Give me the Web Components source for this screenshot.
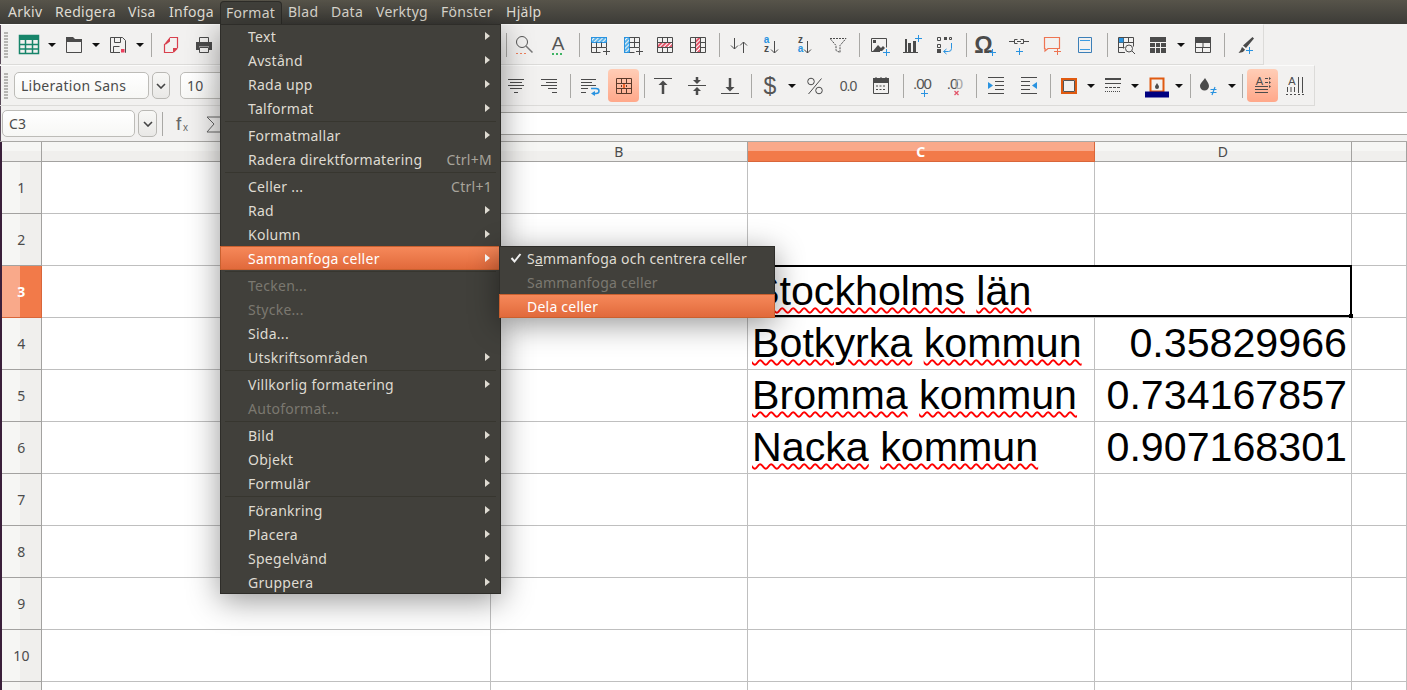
<!DOCTYPE html>
<html lang="sv">
<head>
<meta charset="utf-8">
<title>Calc</title>
<style>
  html, body { margin: 0; height: 100%; overflow: hidden; background: #f2f1f0; }
  body { font: 14px "Noto Sans", sans-serif; letter-spacing: .27px; }
</style>
</head>
<body>
<lo-app>
  <lo-menubar>
    <lo-title w="47" style="margin-left:2px">Arkiv</lo-title>
    <lo-title w="73">Redigera</lo-title>
    <lo-title w="41">Visa</lo-title>
    <lo-title w="57">Infoga</lo-title>
    <lo-title w="62" open>Format</lo-title>
    <lo-title w="43">Blad</lo-title>
    <lo-title w="45">Data</lo-title>
    <lo-title w="65">Verktyg</lo-title>
    <lo-title w="65">Fönster</lo-title>
    <lo-title w="50">Hjälp</lo-title>
  </lo-menubar>

  <lo-toolbar end="1264">
    <lo-grip c="5.5" w="4"></lo-grip>
    <lo-tool icon="sheet" c="29"></lo-tool><lo-drop c="52"></lo-drop>
    <lo-tool icon="folder" c="74"></lo-tool><lo-drop c="96"></lo-drop>
    <lo-tool icon="save" c="118"></lo-tool><lo-drop c="140"></lo-drop>
    <lo-sep c="151.5"></lo-sep>
    <lo-tool icon="pdf" c="171"></lo-tool>
    <lo-tool icon="print" c="204"></lo-tool>
    <lo-sep c="506"></lo-sep>
    <lo-tool icon="search" c="524"></lo-tool>
    <lo-tool icon="fontcolor" c="558"></lo-tool>
    <lo-sep c="579.5"></lo-sep>
    <lo-tool icon="insrow" c="599"></lo-tool>
    <lo-tool icon="inscol" c="632"></lo-tool>
    <lo-tool icon="delrow" c="665"></lo-tool>
    <lo-tool icon="delcol" c="698"></lo-tool>
    <lo-sep c="719.5"></lo-sep>
    <lo-tool icon="sort" c="739"></lo-tool>
    <lo-tool icon="az" c="771"></lo-tool>
    <lo-tool icon="za" c="805"></lo-tool>
    <lo-tool icon="filter" c="838"></lo-tool>
    <lo-sep c="859.5"></lo-sep>
    <lo-tool icon="image" c="879"></lo-tool>
    <lo-tool icon="chart" c="912"></lo-tool>
    <lo-tool icon="pivot" c="945"></lo-tool>
    <lo-sep c="966.5"></lo-sep>
    <lo-tool icon="omega" c="984"></lo-tool>
    <lo-tool icon="link" c="1019"></lo-tool>
    <lo-tool icon="comment" c="1052"></lo-tool>
    <lo-tool icon="hf" c="1085"></lo-tool>
    <lo-sep c="1107"></lo-sep>
    <lo-tool icon="data" c="1126"></lo-tool>
    <lo-tool icon="table" c="1158"></lo-tool><lo-drop c="1181"></lo-drop>
    <lo-tool icon="table2" c="1203"></lo-tool>
    <lo-sep c="1224.5"></lo-sep>
    <lo-tool icon="brush" c="1245"></lo-tool>
  </lo-toolbar>

  <lo-toolbar end="1315">
    <lo-grip c="5.5" w="4"></lo-grip>
    <lo-combo c="81.5" w="135">Liberation Sans</lo-combo>
    <lo-combo-btn c="161" w="18"></lo-combo-btn>
    <lo-combo c="210" w="60">10</lo-combo>
    <lo-tool icon="alignc" c="516"></lo-tool>
    <lo-tool icon="alignr" c="549"></lo-tool>
    <lo-sep c="570.5"></lo-sep>
    <lo-tool icon="wrap" c="590"></lo-tool>
    <lo-tool icon="merge" c="623.5" w="31" active></lo-tool>
    <lo-sep c="644.5"></lo-sep>
    <lo-tool icon="top" c="663"></lo-tool>
    <lo-tool icon="middle" c="697"></lo-tool>
    <lo-tool icon="bottom" c="730"></lo-tool>
    <lo-sep c="751.5"></lo-sep>
    <lo-tool icon="dollar" c="770"></lo-tool><lo-drop c="792"></lo-drop>
    <lo-tool icon="percent" c="815"></lo-tool>
    <lo-tool icon="num" c="848"></lo-tool>
    <lo-tool icon="calendar" c="881"></lo-tool>
    <lo-sep c="903"></lo-sep>
    <lo-tool icon="decplus" c="922"></lo-tool>
    <lo-tool icon="decminus" c="955"></lo-tool>
    <lo-sep c="976.5"></lo-sep>
    <lo-tool icon="indent" c="996"></lo-tool>
    <lo-tool icon="outdent" c="1029"></lo-tool>
    <lo-sep c="1050.5"></lo-sep>
    <lo-tool icon="border" c="1069"></lo-tool><lo-drop c="1091"></lo-drop>
    <lo-tool icon="borderstyle" c="1113"></lo-tool><lo-drop c="1135"></lo-drop>
    <lo-tool icon="bordercolor" c="1157"></lo-tool><lo-drop c="1179"></lo-drop>
    <lo-sep c="1190.5"></lo-sep>
    <lo-tool icon="cond" c="1208"></lo-tool><lo-drop c="1232"></lo-drop>
    <lo-sep c="1242.5"></lo-sep>
    <lo-tool icon="textwrap" c="1262.5" w="31" active></lo-tool>
    <lo-tool icon="vertical" c="1295"></lo-tool>
  </lo-toolbar>

  <lo-namebar>C3</lo-namebar>

  <lo-sheet>
    <span slot="C3"><lo-typo>Stockholms</lo-typo> <lo-typo>län</lo-typo></span>
    <span slot="C4"><lo-typo>Botkyrka</lo-typo> <lo-typo>kommun</lo-typo></span>
    <span slot="D4">0.35829966</span>
    <span slot="C5"><lo-typo>Bromma</lo-typo> <lo-typo>kommun</lo-typo></span>
    <span slot="D5">0.734167857</span>
    <span slot="C6"><lo-typo>Nacka</lo-typo> <lo-typo>kommun</lo-typo></span>
    <span slot="D6">0.907168301</span>
  </lo-sheet>

  <lo-menu style="left:220px;top:24px;width:281px">
    <lo-item more>Text</lo-item>
    <lo-item more>Avstånd</lo-item>
    <lo-item more>Rada upp</lo-item>
    <lo-item more>Talformat</lo-item>
    <lo-rule></lo-rule>
    <lo-item more>Formatmallar</lo-item>
    <lo-item keys="Ctrl+M">Radera direktformatering</lo-item>
    <lo-rule></lo-rule>
    <lo-item keys="Ctrl+1">Celler ...</lo-item>
    <lo-item more>Rad</lo-item>
    <lo-item more>Kolumn</lo-item>
    <lo-item more hot>Sammanfoga celler</lo-item>
    <lo-rule></lo-rule>
    <lo-item off>Tecken...</lo-item>
    <lo-item off>Stycke...</lo-item>
    <lo-item>Sida...</lo-item>
    <lo-item more>Utskriftsområden</lo-item>
    <lo-rule></lo-rule>
    <lo-item more>Villkorlig formatering</lo-item>
    <lo-item off>Autoformat...</lo-item>
    <lo-rule></lo-rule>
    <lo-item more>Bild</lo-item>
    <lo-item more>Objekt</lo-item>
    <lo-item more>Formulär</lo-item>
    <lo-rule></lo-rule>
    <lo-item more>Förankring</lo-item>
    <lo-item more>Placera</lo-item>
    <lo-item more>Spegelvänd</lo-item>
    <lo-item more>Gruppera</lo-item>
  </lo-menu>

  <lo-menu style="left:499px;top:246px;width:276px;letter-spacing:.22px">
    <lo-item checked>S<span style="text-decoration:underline">a</span>mmanfoga och centrera celler</lo-item>
    <lo-item off>Sammanfoga celler</lo-item>
    <lo-item hot>Dela celler</lo-item>
  </lo-menu>
</lo-app>

<script>
"use strict";
const D = "#4b4b4b", B = "#2a93e0", R = "#e2566a";

const plus = (x, y, c = B) => `<path stroke="${c}" fill="none" d="M${x - 3} ${y + .5}h7M${x + .5} ${y - 3}v7"/>`;
const glyph = (t, x, y, size, c = D, extra = "") =>
  `<text x="${x}" y="${y}" font-family="Liberation Sans" font-size="${size}" text-anchor="middle" fill="${c}" ${extra}>${t}</text>`;
const hatch = (col) => `<defs><pattern id="h" width="3" height="3" patternUnits="userSpaceOnUse" patternTransform="rotate(-45)"><rect width="3" height="2" fill="${col}"/></pattern></defs>`;
const line = (d, c = D, w = 1) => `<path fill="none" stroke="${c}" stroke-width="${w}" d="${d}"/>`;

// icons are drawn in a 24x24 box, 1 unit = 1 pixel
const ICONS = {
  sheet: `<rect x="2" y="2" width="20" height="5" fill="#17856a"/>` + line("M2.5 2.5h19v18h-19zM2.5 11.5h19M2.5 16h19M8.5 7v13M15.5 7v13", "#17856a", 1.5),
  folder: `<path fill="${D}" d="M4 4h7l2 2h7v3H4z"/>` + line("M4.5 5v14.5h15V6"),
  save: line("M4.5 4.5h12l3 3v12h-15zM8.5 5v4.5h6V5M7.5 19v-5.5h6") + `<rect x="14" y="15" width="5" height="5" fill="#f2f1f0"/><rect x="15" y="16" width="3.5" height="3.5" fill="#ec3f5d"/>`,
  pdf: line("M11 4.5h7.5V15M14 19.5H5.5V11", "#d8404e", 1.2) + `<path fill="#d8404e" d="M11 4v4.5L7 11.5H5zM18.5 15v1L15 19.5h-1V15z"/>`,
  print: line("M7.5 9V4.5h9V9M7.5 14.5h9v5h-9z") + `<path fill="${D}" d="M4 9h16v8h-3v-3.5H7V17H4z"/>`,
  search: line("M15.5 9a5.5 5.5 0 1 1-11 0a5.5 5.5 0 1 1 11 0z", "#555") + line("M14 13l6.5 6.5", "#777", 1.5) + `<path stroke="#f0805c" stroke-dasharray="2 2" d="M4 20.5h10"/>`,
  fontcolor: glyph("A", 12, 17, 19, "#555") + `<path stroke="#3fb465" stroke-width="2" stroke-dasharray="2 2" d="M6 21h12"/>`,
  insrow: hatch("#5ab4ec") + `<rect x="4.5" y="4.5" width="15" height="5" fill="url(#h)" stroke="#2a93e0"/>` + line("M4.5 9.5v10h9M4.5 14.5h15M9.5 9.5v10M14.5 9.5v5M19.5 9.5v5") + plus(19, 18, D),
  inscol: hatch("#5ab4ec") + `<rect x="4.5" y="4.5" width="5" height="15" fill="url(#h)" stroke="#2a93e0"/>` + line("M9.5 4.5h10v10M9.5 9.5h10M9.5 14.5h10M14.5 4.5v10M9.5 19.5h5") + plus(19, 18, D),
  delrow: hatch("#e2566a") + line("M4.5 4.5h15v15h-15zM4.5 9.5h15M4.5 14.5h15M9.5 4.5v15M14.5 4.5v15") + `<rect x="5" y="10" width="14" height="4" fill="#fff"/><rect x="5" y="10" width="14" height="4" fill="url(#h)"/>`,
  delcol: hatch("#e2566a") + line("M4.5 4.5h15v15h-15zM4.5 9.5h15M4.5 14.5h15M9.5 4.5v15M14.5 4.5v15") + `<rect x="10" y="5" width="4" height="14" fill="#fff"/><rect x="10" y="5" width="4" height="14" fill="url(#h)"/>`,
  sort: line("M7.5 5v11M4 12.5l3.5 3.5 3.5-3.5M16.5 20V9M13 12.5L16.5 9l3.5 3.5"),
  az: glyph("a", 7.5, 10, 10, B, 'font-weight="bold"') + glyph("z", 7.5, 19, 10, D, 'font-weight="bold"') + line("M15.5 8v12M12 16.5l3.5 3.5 3.5-3.5"),
  za: glyph("z", 7.5, 10, 10, D, 'font-weight="bold"') + glyph("a", 7.5, 19, 10, B, 'font-weight="bold"') + line("M14.5 8v12M11 16.5l3.5 3.5 3.5-3.5"),
  filter: `<path fill="none" stroke="${D}" stroke-dasharray="2 1" d="M4 5.5h16L14 12.5v7l-4-2v-5z"/>`,
  image: line("M4.5 5.5h15v9M13 18.5H4.5v-13") + `<path fill="${D}" d="M6 18l5-6 3 3 2-2 2 2-3 3z"/><rect x="6" y="7" width="3" height="3" fill="${D}"/>` + plus(19, 19),
  chart: line("M3 19.5h15") + `<rect x="5" y="6" width="2" height="13" fill="${D}"/><rect x="8" y="10" width="3" height="9" fill="${D}"/><rect x="13" y="8" width="3" height="11" fill="${D}"/>` + plus(18, 5),
  pivot: line("M4.5 4.5h3v3h-3zM4.5 11.5h3v3h-3zM16.5 4.5h2v2h-2z") + `<rect x="11" y="4" width="3" height="3" fill="${D}"/><rect x="4" y="16" width="4" height="4" fill="${D}"/>` + line("M18.5 10v5.5q0 3-3 3H11M13.5 16l-3 2.5 3 2.5", B),
  omega: glyph("Ω", 11.5, 20, 23, D, 'font-weight="bold"') + plus(20, 19),
  link: line("M2 8.5h5M7.5 6.5h3M7.5 10.5h3M7.5 6.5v4M13.5 6.5h3M13.5 10.5h3M16.5 6.5v4M10 8.5h4M17 8.5h5") + plus(12, 18),
  comment: line("M4.5 4.5h15v11H8L5 18v-2.5h-.5z", "#ee7452", 1.2) + plus(17, 18, "#ee7452"),
  hf: line("M5.5 4.5h13v15h-13z", "#3c7fb8") + line("M7 7.5h10M7 16.5h10", "#3c9ae0", 1),
  data: line("M4.5 4.5h15v9M11 19.5H4.5v-15M4.5 9.5h15M4.5 14.5h6M9.5 4.5v11M14.5 4.5v5") + `<rect x="5" y="5" width="4.5" height="4.5" fill="${B}"/>` + line("M18.5 15.5a3.5 3.5 0 1 1-7 0a3.5 3.5 0 1 1 7 0zM18 18l3 3"),
  table: `<rect x="4" y="4" width="16" height="16" fill="${D}"/>` + line("M4 9.5h16M4 14.5h16M9.5 9v11M14.5 9v11", "#f2f1f0"),
  table2: `<rect x="4" y="4" width="16" height="5" fill="${D}"/>` + line("M4.5 4.5h15v15h-15zM4.5 9.5h15M4.5 14.5h15M12 9.5v5M11.5 14.5v5"),
  brush: `<path fill="${D}" d="M19.5 4L21 5.5 13 15l-3-2.5zM9 14l3 2.5Q11 19.5 5.5 20 8 17.5 9 14z"/>` + plus(16, 17),
  alignc: line("M4 5.5h16M6 8.5h12M4 11.5h16M6 14.5h12M10 18.5h4"),
  alignr: line("M4 5.5h16M9 8.5h11M4 11.5h16M11 14.5h9M15 18.5h5"),
  wrap: line("M3 5.5h15M3 8.5h11M3 11.5h15M3 14.5h7M3 18.5h5") + line("M13 14.5h5q3 0 3 2.5t-3 2.5h-3", B, 1.5) + `<path fill="${B}" d="M17 17v5l-4-2.5z"/>`,
  merge: line("M4.5 4.5h15v15h-15zM4.5 9.5h15M4.5 14.5h15M9.5 4.5v5M14.5 4.5v5M9.5 14.5v5M14.5 14.5v5M9.5 11v2M14.5 11v2", "#5a3a2a") + `<path fill="#f0642a" d="M11 10h2v4h-2z"/>`,
  top: line("M3 4.5h18") + line("M12 20V10", D, 2.5) + `<path fill="${D}" d="M7.5 11L12 6.5 16.5 11z"/>`,
  middle: line("M3 11.5h18") + line("M12 3v4M12 16v5", D, 2.5) + `<path fill="${D}" d="M8 6h8l-4 4zM8 17h8l-4-4z"/>`,
  bottom: line("M3 19.5h18") + line("M12 4v10", D, 2.5) + `<path fill="${D}" d="M7.5 13h9L12 17.5z"/>`,
  dollar: glyph("$", 12, 20, 23, "#555"),
  percent: line("M18.5 4.5L5.5 20") + `<circle cx="8" cy="7.5" r="3.3" fill="none" stroke="${D}"/><circle cx="16" cy="16.5" r="3.3" fill="none" stroke="${D}"/>`,
  num: glyph("0.0", 12, 17, 14, "#555", 'letter-spacing="-1"'),
  calendar: `<rect x="4" y="4" width="16" height="5" fill="${D}"/>` + line("M4.5 6v13.5h15V6M7 3v3M12 3v3M17 3v3", D) + `<path stroke="${D}" stroke-dasharray="2 1.5" d="M7 12h10M7 15.5h10"/>`,
  decplus: glyph(".00", 12, 15, 15, "#555", 'letter-spacing="-1"') + plus(14, 19),
  decminus: glyph(".0", 9, 15, 15, "#555", 'letter-spacing="-1"') + glyph("0", 16, 15, 15, "#aaa") + line("M11.5 17l4 4M15.5 17l-4 4", R, 1.3),
  indent: line("M4 3.5h16M11 7.5h9M11 11.5h9M11 15.5h9M4 19.5h16") + `<path fill="${B}" d="M4 8l5 3.5L4 15z"/>`,
  outdent: line("M4 3.5h16M4 7.5h9M4 11.5h9M4 15.5h9M4 19.5h16") + `<path fill="${B}" d="M20 8l-5 3.5 5 3.5z"/>`,
  border: `<rect x="5" y="5" width="14" height="14" fill="none" stroke="#e05a10" stroke-width="2"/>` + line("M6.5 6.5h11v11h-11z", "#555"),
  borderstyle: `<rect x="4" y="4" width="16" height="2" fill="${D}"/>` + line("M4 9.5h16") + `<path stroke="${D}" stroke-dasharray="3 1" d="M4 13.5h16"/><path stroke="${D}" stroke-dasharray="1 1" d="M4 17.5h16"/>`,
  bordercolor: line("M5.5 4.5h13v13h-13z", "#e05a10", 2) + `<path fill="${D}" d="M12 9c1 2 2 2.5 2 4a2 2 0 0 1-4 0c0-1.5 1-2 2-4z"/><rect x="0" y="17.5" width="24" height="6" fill="#000080"/>`,
  cond: `<path fill="${D}" d="M9 4c1.5 3 4 5 4 8a4.5 4.5 0 0 1-9 0c0-3 3.5-5 5-8z"/>` + line("M14.5 15.5h6M14.5 18.5h6M19 13l-3 8", B, 1.2),
  textwrap: glyph("A", 8.5, 11, 11) + line("M14 4.5h3M14 8.5h3M4 12.5h13M4 15.5h13M4 18.5h13") + `<path fill="${D}" d="M18 3v3l2-1.5zM18 7v3l2-1.5zM18 11v3l2-1.5z"/>`,
  vertical: glyph("A", 9, 11, 11) + line("M15.5 3v16M19.5 3v16M4.5 13v5M8 13v5M11.5 13v5") + `<path stroke="${D}" stroke-dasharray="2 2" d="M3 20.5h18"/>`,
};

class LoApp extends HTMLElement {
  constructor() {
    super();
    this.attachShadow({ mode: "open" }).innerHTML = `
      <style>:host { display: flex; flex-direction: column; position: relative; width: 1407px; height: 690px; overflow: hidden; color: #4b4b4b; }</style>
      <slot></slot>`;
  }
}

class LoMenubar extends HTMLElement {
  constructor() {
    super();
    this.attachShadow({ mode: "open" }).innerHTML = `
      <style>:host { display: flex; height: 24px; flex: none; color: #dfdbd2; background: linear-gradient(#57544a, #3c3b37); }</style>
      <slot></slot>`;
  }
}

class LoTitle extends HTMLElement {
  constructor() {
    super();
    this.attachShadow({ mode: "open" }).innerHTML = `
      <style>
        :host { display: block; box-sizing: border-box; width: var(--w); padding-left: 6px; line-height: 24px; white-space: nowrap; }
        :host([open]) { background: #41403b; border: 1px solid #2e2d29; border-bottom: 0; border-radius: 4px 4px 0 0; margin-top: 1px; line-height: 22px; padding-left: 5px; }
      </style>
      <slot></slot>`;
  }
  connectedCallback() { this.style.setProperty("--w", this.getAttribute("w") + "px"); }
}

// toolbars are laid out in flow: each child says where its centre should fall
class LoToolbar extends HTMLElement {
  constructor() {
    super();
    this.attachShadow({ mode: "open" }).innerHTML = `
      <style>
        :host { display: flex; align-items: center; box-sizing: border-box; height: 41px; flex: none; background: #f2f1f0;
                border-top: 1px solid #fbfbfa; border-bottom: 1px solid #dcdbd9; border-right: 1px solid #dcdbd9; box-shadow: inset 1px 0 #5a4a5a; }
      </style>
      <slot></slot>`;
  }
  connectedCallback() {
    this.style.width = this.getAttribute("end") + "px";
    let x = 0;
    for (const el of this.children) {
      const w = +el.getAttribute("w") || el.defaultWidth || 24;
      const c = +el.getAttribute("c");
      el.style.width = w + "px";
      el.style.marginLeft = (c - w / 2 - x) + "px";
      x = c + w / 2;
    }
  }
}

class LoTool extends HTMLElement {
  constructor() {
    super();
    this.attachShadow({ mode: "open" });
  }
  connectedCallback() {
    this.shadowRoot.innerHTML = `
      <style>
        :host { display: flex; flex: none; align-items: center; justify-content: center; height: 33px; letter-spacing: 0; }
        :host([active]) { background: linear-gradient(#ffcdb6, #ffa88a); border-radius: 4px; }
        svg { display: block; flex: none; }
      </style>
      <svg width="24" height="24" viewBox="0 0 24 24">${ICONS[this.getAttribute("icon")] || ""}</svg>`;
  }
}

class LoDrop extends HTMLElement {
  constructor() {
    super();
    this.defaultWidth = 8;
    this.attachShadow({ mode: "open" }).innerHTML = `
      <style>:host { display: block; flex: none; box-sizing: border-box; height: 4px; border-top: 4px solid #111; border-left: 4px solid transparent; border-right: 4px solid transparent; }</style>`;
  }
}

class LoSep extends HTMLElement {
  constructor() {
    super();
    this.defaultWidth = 1;
    this.attachShadow({ mode: "open" }).innerHTML = `
      <style>:host { display: block; flex: none; height: 24px; background: #a9a8a5; }</style>`;
  }
}

class LoGrip extends HTMLElement {
  constructor() {
    super();
    this.defaultWidth = 3;
    this.attachShadow({ mode: "open" }).innerHTML = `
      <style>:host { display: block; flex: none; height: 26px; background: repeating-linear-gradient(#b6b5b2 0 2px, transparent 2px 3px); }</style>`;
  }
}

class LoCombo extends HTMLElement {
  constructor() {
    super();
    this.attachShadow({ mode: "open" }).innerHTML = `
      <style>
        :host { display: block; flex: none; box-sizing: border-box; height: 27px; padding-left: 6px; line-height: 25px; border: 1px solid #bdbcb8; border-radius: 5px;
                background: linear-gradient(#fff, #f7f7f5); white-space: nowrap; overflow: hidden; }
      </style>
      <slot></slot>`;
  }
}

const CHEVRON = `<svg width="10" height="6" viewBox="0 0 10 6"><path d="M1 1l4 4 4-4" fill="none" stroke="#444" stroke-width="1.6"/></svg>`;

class LoComboBtn extends HTMLElement {
  constructor() {
    super();
    this.attachShadow({ mode: "open" }).innerHTML = `
      <style>
        :host { display: flex; flex: none; align-items: center; justify-content: center; box-sizing: border-box; height: 27px; border: 1px solid #b9b8b4; border-radius: 5px; background: linear-gradient(#f8f8f6, #e9e8e6); }
      </style>${CHEVRON}`;
  }
}

class LoNamebar extends HTMLElement {
  constructor() {
    super();
    this.attachShadow({ mode: "open" }).innerHTML = `
      <style>
        :host { display: flex; align-items: center; flex: none; height: 35px; background: #f2f1f0; box-shadow: inset 1px 0 #5a4a5a; }
        .name { box-sizing: border-box; width: 133px; height: 27px; margin: 0 2px 0 2px; padding-left: 6px; line-height: 25px; border: 1px solid #bdbcb8; border-radius: 5px; background: linear-gradient(#fff, #f7f7f5); }
        .btn { display: flex; align-items: center; justify-content: center; box-sizing: border-box; width: 19px; height: 27px; margin-left: 1px; border: 1px solid #b9b8b4; border-radius: 5px; background: linear-gradient(#f8f8f6, #e9e8e6); }
        .sep { width: 1px; height: 24px; margin-left: 5px; background: #a9a8a5; }
        svg.fn { margin-left: 8px; letter-spacing: 0; }
        .input { flex: 1; box-sizing: border-box; align-self: flex-start; height: 23px; margin: 6px 0 0 4px; background: #fff; border-top: 1px solid #a9a8a5; border-bottom: 1px solid #a9a8a5; }
      </style>
      <div class="name"><slot></slot></div>
      <div class="btn">${CHEVRON}</div>
      <div class="sep"></div>
      <svg class="fn" width="60" height="24" viewBox="0 0 60 24">
        <text x="5" y="18" font-family="Liberation Sans" font-size="19" fill="#666">f</text>
        <text x="12" y="19" font-family="Liberation Sans" font-size="10" fill="#666">x</text>
        <path d="M50 5H36l7 7-7 8h14" fill="none" stroke="#666"/>
      </svg>
      <div class="input"></div>`;
  }
}

class LoSheet extends HTMLElement {
  constructor() {
    super();
    // column A's label sits behind the open menu, so it stays empty
    const cols = ["A", "B", "C", "D", "E"];
    let html = `<div class="hd corner"></div>`;
    cols.forEach(c => {
      html += `<div class="hd col ${c == "C" ? "sel" : ""}">${c == "E" || c == "A" ? "" : c}</div>`;
    });
    for (let r = 1; r <= 11; r++) {
      html += `<div class="hd row ${r == 3 ? "sel" : ""}">${r == 11 ? "" : r}</div>`;
      cols.forEach(c => {
        if (r == 3 && c == "D") return;
        const cls = r == 3 && c == "C" ? "cell merged" : c == "D" ? "cell num" : "cell";
        html += `<div class="${cls}"><slot name="${c}${r}"></slot></div>`;
      });
    }
    this.attachShadow({ mode: "open" }).innerHTML = `
      <style>
        :host { display: grid; flex: none; grid-template-columns: 40px 449px 257px 347px 257px 55px; grid-auto-rows: 52px; grid-template-rows: 20px;
                border-top: 1px solid #a9a8a5; padding-left: 2px; background: #fff; box-shadow: inset 2px 0 #3a1f3a; }
        .hd { box-sizing: border-box; display: flex; align-items: center; justify-content: center; border-right: 1px solid #a3a2a0; border-bottom: 1px solid #a3a2a0; font-size: 14px; color: #4b4b4b; }
        .col, .corner { background: linear-gradient(#f6f6f4 9px, #f0efed 9px); }
        .col.sel { background: linear-gradient(#f9a98a 9px, #f27a49 9px); color: #fff; font-weight: 700; border-color: #d9663a; }
        .row { background: linear-gradient(90deg, #f6f6f4 18px, #f0efed 18px); }
        .row.sel { background: linear-gradient(90deg, #f9a98a 18px, #f27a49 18px); color: #fff; font-weight: 700; border-color: #d9663a; }
        .cell { box-sizing: border-box; display: flex; align-items: flex-end; position: relative; padding: 0 4px 3px 4px; border-right: 1px solid #bfbfbf; border-bottom: 1px solid #bfbfbf;
                font: 41.2px/46px "Liberation Sans", sans-serif; letter-spacing: 0; color: #000; white-space: nowrap; }
        .num { justify-content: flex-end; padding-right: 4px; }
        .merged { grid-column: span 2; }
        .merged::after { content: ""; position: absolute; inset: -1px -1px 0 -1px; border: 2px solid #000; }
        .merged::before { content: ""; position: absolute; right: -2px; bottom: -1px; width: 4px; height: 4px; background: #000; z-index: 1; }
      </style>${html}`;
  }
}

class LoTypo extends HTMLElement {
  constructor() {
    super();
    this.attachShadow({ mode: "open" }).innerHTML = `
      <style>:host { text-decoration: underline wavy #f00 1.5px; text-underline-offset: 2px; }</style>
      <slot></slot>`;
  }
}

class LoMenu extends HTMLElement {
  constructor() {
    super();
    this.attachShadow({ mode: "open" }).innerHTML = `
      <style>
        :host { display: block; position: absolute; box-sizing: border-box; background: #41403b; outline: 1px solid #2e2d29; outline-offset: -1px; box-shadow: 0 6px 30px rgba(0,0,0,.42); color: #dfdbd2; }
      </style>
      <slot></slot>`;
  }
}

class LoItem extends HTMLElement {
  constructor() {
    super();
    this.attachShadow({ mode: "open" });
  }
  connectedCallback() {
    const keys = this.getAttribute("keys");
    this.shadowRoot.innerHTML = `
      <style>
        :host { display: flex; align-items: center; box-sizing: border-box; height: 24px; padding: 0 9px 0 28px; white-space: nowrap; position: relative; }
        :host([hot]) { background: linear-gradient(#f78a5b, #e0683a); box-shadow: inset 0 0 0 1px #c9602f; color: #fff; }
        :host([off]) { color: #7b7870; }
        .label { flex: 1; }
        .keys { color: #a8a49b; }
        .more { width: 0; height: 0; border-left: 5px solid currentColor; border-top: 4px solid transparent; border-bottom: 4px solid transparent; margin-right: 2px; }
        .check { position: absolute; left: 11px; top: 6px; }
      </style>
      ${this.hasAttribute("checked") ? `<svg class="check" width="12" height="12" viewBox="0 0 12 12"><path d="M1.5 6l3 3.5L10.5 2" fill="none" stroke="#eee" stroke-width="2"/></svg>` : ""}
      <span class="label"><slot></slot></span>
      ${keys ? `<span class="keys">${keys}</span>` : ""}
      ${this.hasAttribute("more") ? `<span class="more"></span>` : ""}`;
  }
}

class LoRule extends HTMLElement {
  constructor() {
    super();
    this.attachShadow({ mode: "open" }).innerHTML = `
      <style>:host { display: block; box-sizing: border-box; height: 3px; padding: 1px 5px; }
      div { height: 1px; background: #37362f; }</style><div></div>`;
  }
}

customElements.define("lo-app", LoApp);
customElements.define("lo-menubar", LoMenubar);
customElements.define("lo-title", LoTitle);
customElements.define("lo-tool", LoTool);
customElements.define("lo-drop", LoDrop);
customElements.define("lo-sep", LoSep);
customElements.define("lo-grip", LoGrip);
customElements.define("lo-combo", LoCombo);
customElements.define("lo-combo-btn", LoComboBtn);
customElements.define("lo-toolbar", LoToolbar);
customElements.define("lo-namebar", LoNamebar);
customElements.define("lo-sheet", LoSheet);
customElements.define("lo-typo", LoTypo);
customElements.define("lo-menu", LoMenu);
customElements.define("lo-item", LoItem);
customElements.define("lo-rule", LoRule);
</script>
</body>
</html>
